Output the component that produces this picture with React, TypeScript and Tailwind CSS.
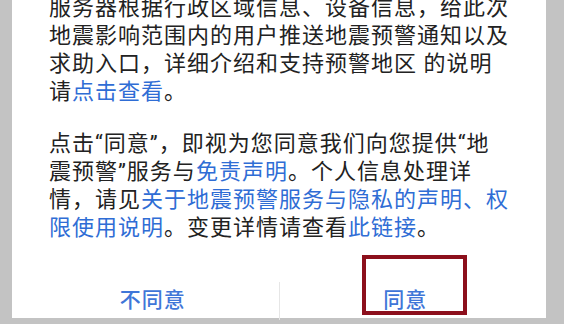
import React from 'react';

const LINK = 'text-[#2f6dd5]';

const Link: React.FC<{ children: React.ReactNode }> = ({ children }) => (
  <span className={LINK}>{children}</span>
);

export default function App() {
  return (
    <div
      className="w-[564px] h-[324px] overflow-hidden bg-[#c3c3c3] pl-[12px] pr-[18px]"
      style={{ fontFamily: 'Roboto, "Noto Sans CJK SC", sans-serif' }}
    >
      {/* Dialog */}
      <div className="relative h-full bg-white">
        <div className="px-[37px] -mt-[6px] text-[22px] leading-[28px] tracking-[1px] text-[#222222] whitespace-nowrap">
          {/* Paragraph 1 */}
          <div>
            <div>服务器根据行政区域信息、设备信息，给此次</div>
            <div>地震影响范围内的用户推送地震预警通知以及</div>
            <div>求助入口，详细介绍和支持预警地区 的说明</div>
            <div>
              请<Link>点击查看</Link>。
            </div>
          </div>

          {/* Paragraph 2 */}
          <div className="mt-[24px]">
            <div>点击“同意”，即视为您同意我们向您提供“地</div>
            <div>
              震预警”服务与<Link>免责声明</Link>。个人信息处理详
            </div>
            <div>
              情，请见<Link>关于地震预警服务与隐私的声明、权</Link>
            </div>
            <div>
              <Link>限使用说明</Link>。变更详情请查看<Link>此链接</Link>。
            </div>
          </div>
        </div>

        {/* Buttons */}
        <div className="mt-[30px] mx-[15px] h-[58px] flex items-center text-[21px] font-medium tracking-[1px] text-[#3f76d8]">
          <button className="flex-1 text-center">不同意</button>
          <div className="w-px h-[38px] bg-[#e6e6e6]" />
          <button className="flex-1 text-center">同意</button>
        </div>

        {/* Highlight annotation */}
        <div className="absolute left-[350px] top-[261px] w-[105px] h-[60px] border-[4px] border-[#8c0f1c]" />
      </div>
    </div>
  );
}
